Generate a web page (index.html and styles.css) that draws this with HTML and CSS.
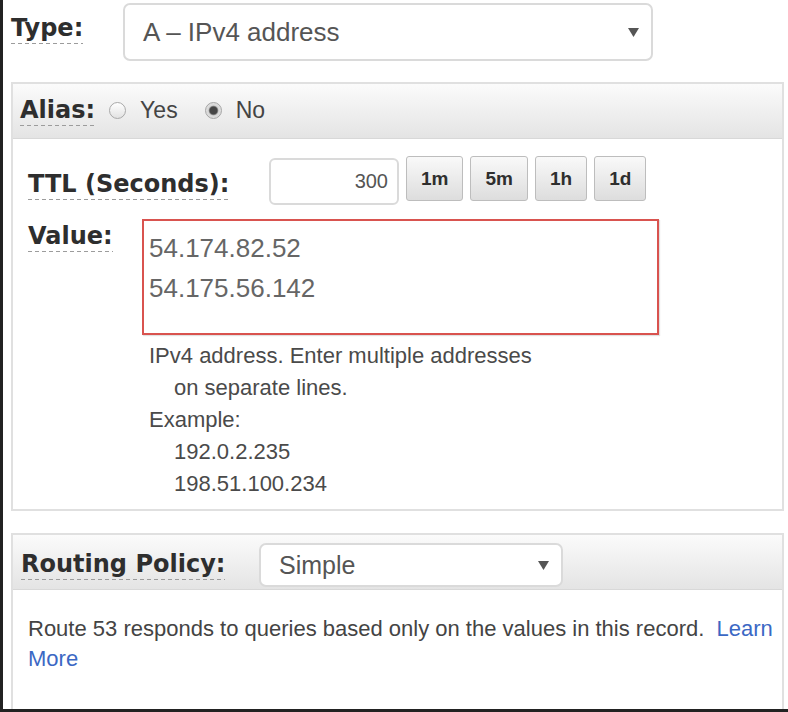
FILE: index.html
```html
<!DOCTYPE html>
<html>
<head>
<meta charset="utf-8">
<title>Record set</title>
<link rel="stylesheet" href="styles.css">
</head>
<body>
<div class="frame">
  <div class="type-row">
    <div class="type-label"><span class="lbl">Type:</span></div>
    <div class="select select-type">
      <span class="select-text">A – IPv4 address</span>
      <svg class="caret" width="11" height="9" viewBox="0 0 11 9"><path d="M0 0H11L5.5 9Z" fill="#555"/></svg>
    </div>
  </div>

  <div class="panel alias-panel">
    <div class="panel-head alias-head">
      <span class="lbl">Alias:</span>
      <span class="radio-opt opt-yes"><span class="radio"></span>Yes</span>
      <span class="radio-opt opt-no"><span class="radio checked"></span>No</span>
    </div>
    <div class="record-body">
      <div class="ttl-row">
        <div class="ttl-label"><span class="lbl">TTL (Seconds):</span></div>
        <input class="ttl-input" type="text" value="300">
        <div class="ttl-buttons">
          <button class="btn">1m</button>
          <button class="btn">5m</button>
          <button class="btn">1h</button>
          <button class="btn">1d</button>
        </div>
      </div>
      <div class="value-row">
        <div class="value-label"><span class="lbl">Value:</span></div>
        <div class="value-field">
          <textarea class="value-input">54.174.82.52
54.175.56.142</textarea>
          <div class="help">
            <div>IPv4 address. Enter multiple addresses</div>
            <div class="indent">on separate lines.</div>
            <div>Example:</div>
            <div class="indent">192.0.2.235</div>
            <div class="indent">198.51.100.234</div>
          </div>
        </div>
      </div>
    </div>
  </div>

  <div class="panel routing-panel">
    <div class="panel-head routing-head">
      <div class="routing-label"><span class="lbl">Routing Policy:</span></div>
      <div class="select select-routing">
        <span class="select-text">Simple</span>
        <svg class="caret" width="11" height="9" viewBox="0 0 11 9"><path d="M0 0H11L5.5 9Z" fill="#555"/></svg>
      </div>
    </div>
    <div class="routing-body">
      <p class="routing-text">Route 53 responds to queries based only on the values in this record.&nbsp; <a class="link" href="#">Learn</a><br><a class="link" href="#">More</a></p>
    </div>
  </div>
</div>
</body>
</html>
```

FILE: styles.css
```css
* {
  box-sizing: border-box;
}

html,
body {
  margin: 0;
  padding: 0;
  background: #fff;
}

body {
  font-family: "Liberation Sans", Arial, sans-serif;
  color: #444;
}

.frame {
  width: 788px;
  height: 712px;
  border-left: 3px solid #222;
  border-bottom: 3px solid #222;
  overflow: hidden;
  background: #fff;
}

.lbl {
  display: inline-block;
  font-family: "DejaVu Sans", Verdana, sans-serif;
  font-weight: bold;
  font-size: 24px;
  line-height: 28px;
  color: #2e2e2e;
  padding-bottom: 2px;
  white-space: nowrap;
  background: repeating-linear-gradient(to right, #9c9c9c 0 4px, transparent 4px 7px) left bottom / 100% 1px no-repeat;
}

/* Type row */
.type-row {
  display: flex;
  align-items: flex-start;
  padding: 3px 0 0 8px;
}

.type-label {
  width: 112px;
  margin-top: 11px;
}

.select {
  display: flex;
  align-items: center;
  justify-content: space-between;
  background: #fff;
  border: 2px solid #dadada;
  border-radius: 7px;
  padding: 0 12px 0 18px;
  font-size: 26px;
  color: #555;
}

.select-type {
  width: 530px;
  height: 58px;
}

.caret {
  display: block;
}

/* Panels */
.panel {
  margin: 0 4px 0 8px;
  border: 2px solid #e0e0e0;
  background: #fff;
}

.alias-panel {
  margin-top: 21px;
}

.routing-panel {
  margin-top: 22px;
}

.panel-head {
  display: flex;
  height: 55px;
  background: linear-gradient(#fbfbfb, #e4e4e4);
  border-bottom: 1px solid #d8d8d8;
}

.alias-head {
  align-items: baseline;
  padding: 12px 0 0 7px;
}

.radio-opt {
  font-size: 23px;
  color: #444;
  white-space: nowrap;
}

.opt-yes {
  margin-left: 14px;
}

.opt-no {
  margin-left: 27px;
}

.radio {
  display: inline-block;
  width: 17px;
  height: 17px;
  margin-right: 14px;
  vertical-align: -1px;
  border: 1px solid #a9a9a9;
  border-radius: 50%;
  background: linear-gradient(#ffffff, #e2e2e2);
}

.radio.checked {
  border-color: #a5a5a5;
  background: radial-gradient(circle at center, #454545 0 3.5px, #7a7a7a 4.2px, #d6d6d6 5.2px, #ececec 100%);
}

/* Record body */
.record-body {
  padding: 17px 0 9px 15px;
}

.ttl-row {
  display: flex;
  align-items: flex-start;
}

.ttl-label {
  width: 241px;
  margin-top: 14px;
}

.ttl-input {
  width: 130px;
  height: 47px;
  margin: 2px 0 0 0;
  border: 2px solid #dadada;
  border-radius: 6px;
  padding: 0 9px 0 0;
  text-align: right;
  font-family: "Liberation Sans", Arial, sans-serif;
  font-size: 20px;
  color: #555;
  background: #fff;
  outline: none;
}

.ttl-buttons {
  display: flex;
  gap: 7px;
  margin-left: 7px;
}

.btn {
  height: 45px;
  padding: 0 14px;
  border: 1px solid #bdbdbd;
  border-radius: 3px;
  background: linear-gradient(#f9f9f9, #dddddd);
  font-family: "Liberation Sans", Arial, sans-serif;
  font-weight: bold;
  font-size: 19px;
  color: #2e2e2e;
}

.value-row {
  display: flex;
  align-items: flex-start;
  margin-top: 14px;
}

.value-label {
  width: 114px;
  margin-top: 3px;
}

.value-input {
  display: block;
  width: 517px;
  height: 116px;
  margin: 0;
  padding: 7px 5px;
  border: 2px solid #d9534f;
  border-radius: 0;
  resize: none;
  overflow: hidden;
  font-family: "Liberation Sans", Arial, sans-serif;
  font-size: 26px;
  line-height: 40px;
  color: #666;
  background: #fff;
  box-shadow: 1px 1px 1px #e2e2e2;
  outline: none;
}

.help {
  margin-top: 5px;
  padding-left: 7px;
  font-size: 22px;
  line-height: 32px;
  color: #4a4a4a;
}

.help .indent {
  padding-left: 25px;
}

/* Routing */
.routing-head {
  align-items: flex-start;
  padding: 8px 0 0 8px;
}

.routing-label {
  width: 238px;
  margin-top: 7px;
}

.select-routing {
  width: 304px;
  height: 44px;
  font-size: 25px;
}

.routing-body {
  min-height: 200px;
  padding: 24px 4px 0 15px;
}

.routing-text {
  margin: 0;
  font-size: 22px;
  line-height: 30px;
  color: #444;
}

.link {
  color: #3b68c4;
  text-decoration: none;
}
```
